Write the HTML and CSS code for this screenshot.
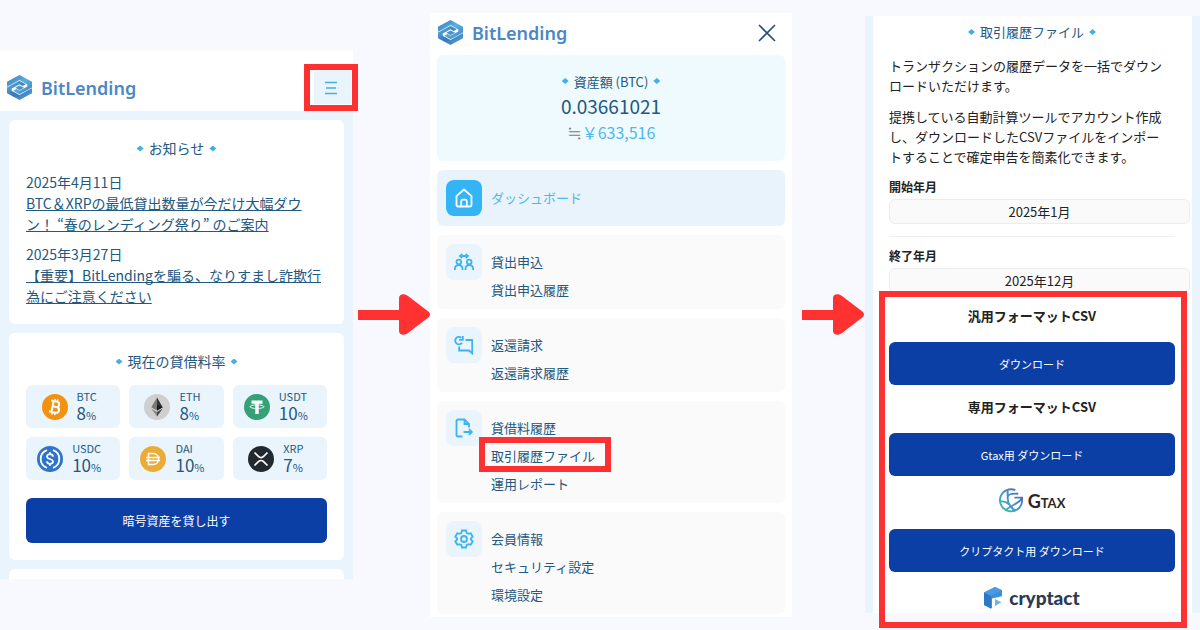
FILE: index.html
```html
<!DOCTYPE html>
<html lang="ja">
<head>
  <meta charset="UTF-8">
  <meta name="viewport" content="width=device-width, initial-scale=1.0">
  <title>BitLending 取引履歴ファイル</title>
  <link rel="stylesheet" href="styles.css">
</head>
<body>
  <svg class="defs" aria-hidden="true">
    <defs>
      <linearGradient id="blue-a" x1="0" y1="0" x2="1" y2="1">
        <stop offset="0" stop-color="#3a76bb"/>
        <stop offset="0.5" stop-color="#58b2df"/>
        <stop offset="1" stop-color="#3d7cc0"/>
      </linearGradient>
      <linearGradient id="blue-b" x1="0" y1="0" x2="1" y2="1">
        <stop offset="0" stop-color="#5bb8e4"/>
        <stop offset="0.5" stop-color="#3a76bb"/>
        <stop offset="1" stop-color="#58a8dc"/>
      </linearGradient>
      <linearGradient id="gtax" x1="0" y1="1" x2="1" y2="0">
        <stop offset="0" stop-color="#3ec0b4"/>
        <stop offset="0.5" stop-color="#4a93c4"/>
        <stop offset="1" stop-color="#5560a8"/>
      </linearGradient>
      <symbol id="logo" viewBox="0 0 24 24">
        <path d="M0 6.500L12 0l12 6.500v5.500L12 18.500l-6-3.300 3-1.700 3 1.600 7.500-4.100v-2L12 4.900 3.500 9.500 0 11.300z" fill="url(#blue-a)"/>
        <path d="M24 17.500L12 24 0 17.500V12l12-6.500 6 3.300-3 1.700-3-1.600L4.500 13v2L12 19.100l8.500-4.600 3.500-1.800z" fill="url(#blue-b)"/>
        <path d="M8 12.200l4-2.200 4.500 2.200-4.500 2.400z" fill="#4a94d0"/>
      </symbol>
    </defs>
  </svg>

  <main class="steps">
    <!-- トップ画面 -->
    <section class="screen home">
      <header class="home-header">
        <a class="brand" href="#"><svg class="brand-icon"><use href="#logo"/></svg>BitLending</a>
        <button class="menu-button marked" type="button" aria-label="メニュー">
          <svg width="12" height="14" viewBox="0 0 12 14" fill="none" stroke="#45ade0" stroke-width="1.600"><path d="M0 1.500h12M1 7h10M0 12.500h12"/></svg>
        </button>
      </header>
      <div class="home-body">
        <div class="card">
          <h2 class="title">お知らせ</h2>
          <div class="news">
            <time>2025年4月11日</time>
            <a href="#">BTC＆XRPの最低貸出数量が今だけ大幅ダウン！ “春のレンディング祭り” のご案内</a>
          </div>
          <div class="news">
            <time>2025年3月27日</time>
            <a href="#">【重要】BitLendingを騙る、なりすまし詐欺行為にご注意ください</a>
          </div>
        </div>
        <div class="card">
          <h2 class="title">現在の貸借料率</h2>
          <ul class="rates">
            <li class="rate">
              <svg class="coin" viewBox="0 0 26 26"><circle cx="13" cy="13" r="13" fill="#f3920f"/><g transform="rotate(12 13 13)" fill="none" stroke="#fff" stroke-width="2"><path d="M10.500 7.500v11M8 7.500h6a2.600 2.600 0 0 1 0 5.200h-3.500M14 12.700h.7a2.900 2.900 0 0 1 0 5.800H8"/><path d="M11.500 5v2.500M14.300 5v2.500M11.500 18.500V21M14.300 18.500V21" stroke-width="1.500"/></g></svg>
              <p class="rate-text">BTC<b>8<small>%</small></b></p>
            </li>
            <li class="rate">
              <svg class="coin" viewBox="0 0 26 26"><circle cx="13" cy="13" r="13" fill="#cfcfcf"/><path d="M13 3.500L7.300 13.300 13 16.600z" fill="#777"/><path d="M13 3.500l5.700 9.800L13 16.600z" fill="#333"/><path d="M7.300 14.500L13 22.500v-4.600z" fill="#888"/><path d="M18.700 14.500L13 22.500v-4.600z" fill="#444"/><path d="M13 10.700l5.700 2.600L13 16.600z" fill="#1c1c1c"/></svg>
              <p class="rate-text">ETH<b>8<small>%</small></b></p>
            </li>
            <li class="rate">
              <svg class="coin" viewBox="0 0 26 26"><circle cx="13" cy="13" r="13" fill="#36a177"/><path d="M7.500 6.500h11v3.200h-3.800V20h-3.400V9.700H7.500z" fill="#fff"/><ellipse cx="13" cy="12.700" rx="7" ry="1.800" fill="none" stroke="#fff" stroke-width=".9"/></svg>
              <p class="rate-text">USDT<b>10<small>%</small></b></p>
            </li>
            <li class="rate">
              <svg class="coin" viewBox="0 0 26 26"><circle cx="13" cy="13" r="13" fill="#2f73ca"/><g fill="none" stroke="#fff" stroke-width="1.800"><path d="M10 4.200a9.300 9.300 0 0 0 0 17.600M16 4.200a9.300 9.300 0 0 1 0 17.600"/><path d="M16 10.700c0-3.300-6-3.300-6-.3 0 3.300 6 1.900 6 5.200 0 3-6 3-6-.3M13 6.200v2M13 17.800v2"/></g></svg>
              <p class="rate-text">USDC<b>10<small>%</small></b></p>
            </li>
            <li class="rate">
              <svg class="coin" viewBox="0 0 26 26"><circle cx="13" cy="13" r="13" fill="#ebac37"/><path d="M8.500 7.500H13c7.500 0 7.500 11 0 11H8.500zM6 11.500h14M6 14.500h14" fill="none" stroke="#fff" stroke-width="1.500"/></svg>
              <p class="rate-text">DAI<b>10<small>%</small></b></p>
            </li>
            <li class="rate">
              <svg class="coin" viewBox="0 0 26 26"><circle cx="13" cy="13" r="13" fill="#22292f"/><path d="M6.500 6.500l3.900 3.900c1.500 1.500 3.700 1.500 5.200 0l3.900-3.900M6.500 19.500l3.900-3.900c1.500-1.500 3.700-1.500 5.200 0l3.900 3.900" fill="none" stroke="#fff" stroke-width="1.700"/></svg>
              <p class="rate-text">XRP<b>7<small>%</small></b></p>
            </li>
          </ul>
          <button class="primary lend" type="button">暗号資産を貸し出す</button>
        </div>
        <div class="card next"></div>
      </div>
    </section>

    <div class="arrow">
      <div class="shaft"></div>
      <svg class="head" viewBox="0 0 31 41"><path d="M0 4C0 0 5 -1 9 2L28 16.500c4 3 4 5 0 8L9 39c-4 3-9 2-9-2z" fill="#ff3131"/></svg>
    </div>

    <!-- メニュー -->
    <section class="screen menu">
      <header class="menu-header">
        <a class="brand" href="#"><svg class="brand-icon"><use href="#logo"/></svg>BitLending</a>
        <button class="close" type="button" aria-label="閉じる">
          <svg width="18" height="18" viewBox="0 0 18 18" fill="none" stroke="#23506f" stroke-width="1.600"><path d="M1 1l16 16M17 1L1 17"/></svg>
        </button>
      </header>
      <div class="assets">
        <h2 class="title">資産額 (BTC)</h2>
        <p class="amount">0.03661021</p>
        <p class="yen"><span class="approx">≒</span>￥633,516</p>
      </div>
      <nav class="nav">
        <div class="group current">
          <span class="tile">
            <svg viewBox="0 0 20 20"><path d="M2.500 8.200L10 1.500l7.500 6.700V17a1.500 1.500 0 0 1-1.500 1.500H4A1.500 1.500 0 0 1 2.500 17z"/><path d="M7.200 18.500v-5.300a1.500 1.500 0 0 1 1.500-1.500h2.600a1.500 1.500 0 0 1 1.500 1.500v5.300"/></svg>
          </span>
          <div class="links"><a href="#">ダッシュボード</a></div>
        </div>
        <div class="group">
          <span class="tile">
            <svg viewBox="0 0 20 20"><circle cx="4.800" cy="10" r="2.300"/><circle cx="15.200" cy="10" r="2.300"/><path d="M.9 18v-1.200c0-5 7.600-5 7.600 0V18M11.500 18v-1.200c0-5 7.600-5 7.600 0V18M6.500 4h7M8.200 2L6 4l2.200 2M11.800 2L14 4l-2.200 2"/></svg>
          </span>
          <div class="links"><a href="#">貸出申込</a><a href="#">貸出申込履歴</a></div>
        </div>
        <div class="group">
          <span class="tile">
            <svg viewBox="0 0 20 20"><path d="M7.300 2.800A3.700 3.700 0 1 0 8 7.700M8.800 1v3.800H5M11.500 5h6.700v13.300L15 15.500H5.200v-4"/></svg>
          </span>
          <div class="links"><a href="#">返還請求</a><a href="#">返還請求履歴</a></div>
        </div>
        <div class="group">
          <span class="tile">
            <svg viewBox="0 0 20 20"><path d="M8.500 18.500H4A1.500 1.500 0 0 1 2.500 17V3A1.500 1.500 0 0 1 4 1.500h6.500L15 6v3.500M10.500 1.500V6H15M9.500 14h8M15 11.200l2.800 2.800-2.800 2.800"/></svg>
          </span>
          <div class="links"><a href="#">貸借料履歴</a><a class="marked" href="#">取引履歴ファイル</a><a href="#">運用レポート</a></div>
        </div>
        <div class="group">
          <span class="tile">
            <svg viewBox="0 0 20 20"><circle cx="10" cy="10" r="3"/><path d="M8 1.500h4l.6 2.400 1.700 1 2.400-.7 2 3.500-1.800 1.700v1.200l1.800 1.700-2 3.500-2.400-.7-1.700 1-.6 2.400H8l-.6-2.400-1.700-1-2.400.7-2-3.500 1.800-1.700V9.400L1.300 7.700l2-3.500 2.400.7 1.700-1z"/></svg>
          </span>
          <div class="links"><a href="#">会員情報</a><a href="#">セキュリティ設定</a><a href="#">環境設定</a></div>
        </div>
      </nav>
    </section>

    <div class="arrow second">
      <div class="shaft"></div>
      <svg class="head" viewBox="0 0 31 41"><path d="M0 4C0 0 5 -1 9 2L28 16.500c4 3 4 5 0 8L9 39c-4 3-9 2-9-2z" fill="#ff3131"/></svg>
    </div>

    <!-- 取引履歴ファイル -->
    <section class="screen history">
      <h2 class="title">取引履歴ファイル</h2>
      <p class="lead">トランザクションの履歴データを一括でダウンロードいただけます。</p>
      <p class="lead">提携している自動計算ツールでアカウント作成し、ダウンロードしたCSVファイルをインポートすることで確定申告を簡素化できます。</p>
      <form class="period">
        <div class="field">
          <label for="from">開始年月</label>
          <input id="from" type="text" value="2025年1月">
        </div>
        <div class="field">
          <label for="to">終了年月</label>
          <input id="to" type="text" value="2025年12月">
        </div>
      </form>
      <div class="downloads marked">
        <h3>汎用フォーマットCSV</h3>
        <button class="primary" type="button">ダウンロード</button>
        <h3>専用フォーマットCSV</h3>
        <button class="primary" type="button">Gtax用 ダウンロード</button>
        <div class="partner gtax">
          <svg width="25" height="25" viewBox="0 0 26 26" fill="none" stroke="url(#gtax)" stroke-width="2"><path d="M17 2.200A11.500 11.500 0 1 0 24 13v-3h-8M9 2v8.500C9 17 13 22 18 23.500M9 9C10 6 14 5.500 20 6M2 14c6-1 13 6 13 10M24 10c-2 6-12 8-17 13"/></svg>
          <span class="gtax-name">G<small>tax</small></span>
        </div>
        <button class="primary" type="button">クリプタクト用 ダウンロード</button>
        <div class="partner cryptact">
          <svg width="20" height="24" viewBox="0 0 20 24"><path d="M0 6.500L11 1l7 3.200v6L8 12.500v10L0 19z" fill="#3d8fdc"/><path d="M0 6.500l7 3.300v13L0 19z" fill="#2f79c4"/><path d="M11 1l7 3.200L7 9.800 0 6.500z" fill="#4a9ae2"/><path d="M11 13l6.500 3.300L11 20z" fill="#6db1ee"/></svg>
          <span class="cryptact-name">cryptact</span>
        </div>
      </div>
    </section>
  </main>
</body>
</html>
```
FILE: styles.css
```css
* {
  box-sizing: border-box;
}

body {
  margin: 0;
  background-color: #f8f9ff;
  font-family: "Noto Sans CJK JP", sans-serif;
  color: #23587f;
}

h2,
h3,
p,
ul {
  margin: 0;
  padding: 0;
  font-weight: normal;
}

a {
  color: inherit;
  text-decoration: none;
}

button {
  border: 0;
  padding: 0;
  font-family: inherit;
  cursor: pointer;
}

.defs {
  position: absolute;
  width: 0;
  height: 0;
}

.steps {
  display: grid;
  grid-template-columns: 353fr 77fr 362fr 73fr 335fr;
  align-items: center;
  min-height: 100vh;
  padding-bottom: 1px;
}

.screen {
  background-color: #ffffff;
}

/* 赤枠 */
.marked {
  position: relative;
}

.marked::after {
  content: "";
  position: absolute;
  border: 6px solid #fd3131;
  pointer-events: none;
}

.brand {
  display: flex;
  align-items: center;
  gap: 9px;
  font-family: "Noto Sans", sans-serif;
  font-size: 18px;
  font-weight: 600;
  color: #4b87c6;
}

.brand-icon {
  width: 25px;
  height: 25px;
}

.title {
  display: flex;
  align-items: center;
  justify-content: center;
  gap: 5px;
  font-size: 14px;
  line-height: 21px;
}

.title::before,
.title::after {
  content: "";
  width: 7px;
  height: 6px;
  background-color: #3fb2e4;
  clip-path: polygon(50% 0, 100% 50%, 50% 100%, 0 50%);
}

.primary {
  display: block;
  width: 100%;
  height: 43px;
  border-radius: 6px;
  background-color: #0c3fa5;
  color: #ffffff;
  font-size: 11px;
}

/* トップ画面 */
.home {
  background-color: #e9f4fd;
}

.home-header {
  display: flex;
  align-items: center;
  justify-content: space-between;
  padding: 21px 2px 7px 7px;
  background-color: #ffffff;
}

.menu-button {
  display: flex;
  align-items: center;
  justify-content: center;
  width: 37px;
  height: 33px;
  padding-right: 3px;
  background-color: #e9f4fd;
}

.menu-button::after {
  inset: -7px -7px -7px -10px;
}

.home-body {
  display: flex;
  flex-direction: column;
  gap: 9px;
  padding: 9px 9px 0;
}

.card {
  padding: 18px 17px 17px;
  border-radius: 6px;
  background-color: #ffffff;
}

.card.next {
  padding: 10px 0 0;
  border-radius: 6px 6px 0 0;
}

.news {
  margin-top: 9px;
  font-size: 14px;
  line-height: 21px;
}

.title + .news {
  margin-top: 13px;
}

.news time {
  display: block;
}

.news a {
  display: block;
  text-decoration: underline;
  text-decoration-skip-ink: none;
}

.rates {
  display: grid;
  grid-template-columns: repeat(3, 1fr);
  gap: 9px;
  margin-top: 13px;
  list-style: none;
}

.rate {
  display: flex;
  align-items: center;
  justify-content: center;
  gap: 9px;
  height: 43px;
  padding-right: 8px;
  border-radius: 6px;
  background-color: #e9f4fd;
}

.coin {
  width: 26px;
  height: 26px;
}

.rate-text {
  font-size: 11px;
  line-height: 15px;
}

.rate-text b {
  display: block;
  font-size: 17px;
  font-weight: normal;
  line-height: 18px;
}

.rate-text small {
  font-size: 11px;
}

.lend {
  height: 45px;
  margin-top: 18px;
  font-size: 12px;
}

/* 矢印 */
.arrow {
  display: flex;
  align-items: center;
  padding-left: 5px;
}

.arrow.second {
  padding: 0 1px 0 10px;
}

.shaft {
  flex: 1;
  height: 10px;
  background-color: #ff3131;
}

.head {
  width: 31px;
  height: 41px;
  margin-left: -1px;
}

/* メニュー */
.menu {
  padding: 0 7px 3px;
}

.menu-header {
  display: flex;
  align-items: center;
  justify-content: space-between;
  height: 42px;
  padding: 0 9px 2px 1px;
}

.close {
  display: flex;
  background: none;
}

.assets {
  padding: 16px 0;
  border-radius: 6px;
  background-color: #eefafd;
  text-align: center;
}

.assets .title {
  font-size: 13px;
}

.amount {
  font-size: 19px;
  line-height: 28px;
}

.yen {
  font-size: 16px;
  line-height: 25px;
  color: #4fb8ea;
}

.approx {
  font-size: 19px;
  line-height: 19px;
  color: #777777;
}

.nav {
  display: flex;
  flex-direction: column;
  gap: 9px;
  margin-top: 9px;
}

.group {
  display: flex;
  align-items: flex-start;
  gap: 9px;
  padding: 9px 9px 5px;
  border-radius: 6px;
  background-color: #fafafa;
}

.group.current {
  align-items: center;
  padding: 10px 9px;
  background-color: #e9f3fc;
  color: #4fb8ea;
}

.tile {
  display: flex;
  align-items: center;
  justify-content: center;
  width: 36px;
  height: 36px;
  border-radius: 8px;
  background-color: #e9f4fd;
  color: #3cb4ee;
}

.current .tile {
  background-color: #33b5f5;
  color: #ffffff;
}

.tile svg {
  width: 20px;
  height: 20px;
  fill: none;
  stroke: currentColor;
  stroke-width: 1.8;
}

.links {
  display: flex;
  flex-direction: column;
  align-items: flex-start;
  padding-top: 4px;
  font-size: 13px;
  line-height: 28px;
}

.current .links {
  padding-top: 0;
}

.links .marked::after {
  inset: -5px -16px -2px -12px;
}

/* 取引履歴ファイル */
.history {
  padding: 6px 17px 3px 16px;
  border: solid #e9f4fd;
  border-width: 0 8px;
  color: #222222;
}

.history .title {
  margin-bottom: 14px;
  font-size: 13px;
  line-height: 20px;
  color: #23587f;
}

.lead {
  margin-bottom: 11px;
  padding-right: 6px;
  font-size: 13px;
  line-height: 20px;
}

.field {
  margin-right: -15px;
}

.field label {
  display: block;
  margin-bottom: 4px;
  font-size: 12px;
  font-weight: bold;
  line-height: 17px;
}

.field input {
  display: block;
  width: 100%;
  height: 25px;
  padding: 0;
  border: 1px solid #ececec;
  border-radius: 6px;
  background-color: #fafafa;
  font-family: inherit;
  font-size: 13px;
  color: #222222;
  text-align: center;
}

.field + .field {
  margin-top: 12px;
}

.field + .field::before {
  content: "";
  display: block;
  height: 1px;
  margin: 0 15px 10px 0;
  background-color: #eeeeee;
}

.downloads {
  padding-top: 13px;
}

.downloads::after {
  inset: -2px -12px -18px -10px;
}

.downloads h3 {
  margin-bottom: 16px;
  font-size: 13px;
  font-weight: bold;
  line-height: 20px;
  text-align: center;
}

.primary + h3 {
  margin-top: 12px;
}

.partner {
  display: flex;
  align-items: center;
  justify-content: center;
  height: 53px;
  padding-bottom: 4px;
}

.gtax {
  gap: 4px;
}

.gtax-name {
  font-family: "Lato", sans-serif;
  font-size: 18px;
  font-weight: bold;
  color: #2d2526;
}

.gtax-name small {
  font-size: 18px;
  font-variant: small-caps;
}

.cryptact {
  gap: 5px;
  height: 38px;
  padding: 14px 0 0;
}

.cryptact-name {
  font-family: "Lato", sans-serif;
  font-size: 19px;
  font-weight: 900;
  line-height: 24px;
  color: #2a3a52;
}
```
